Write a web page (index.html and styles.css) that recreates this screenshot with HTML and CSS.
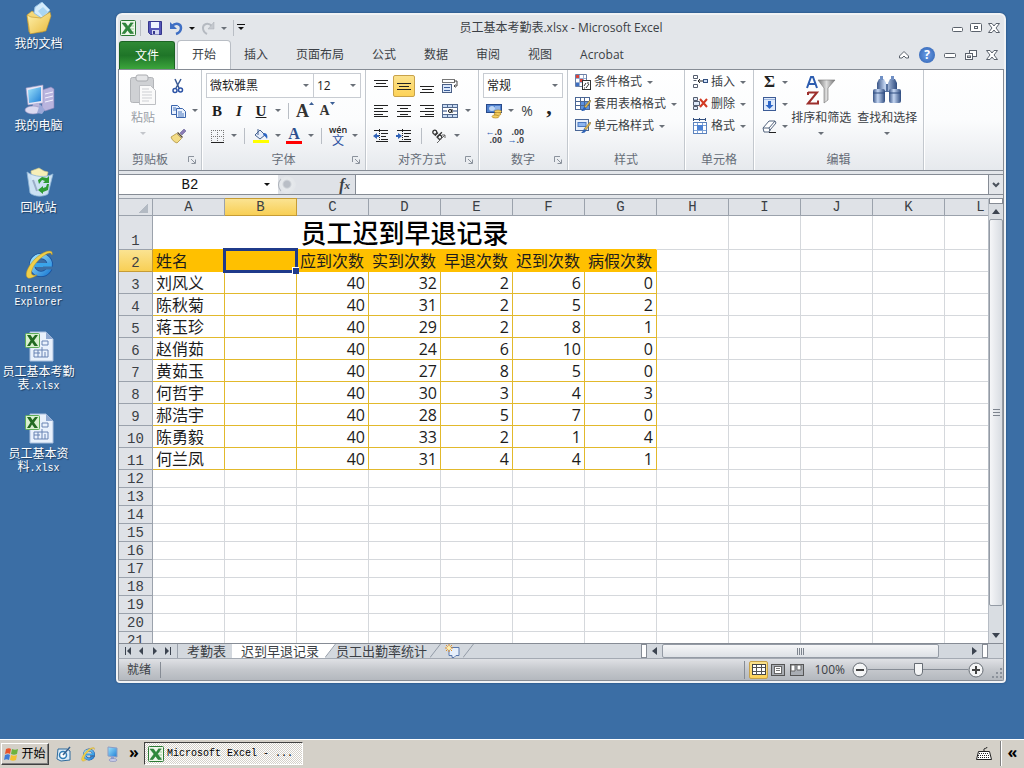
FILE: index.html
```
<!DOCTYPE html>
<html lang="zh-CN">
<head>
    <meta charset="UTF-8">
    <meta name="viewport" content="width=device-width, initial-scale=1.0">
    <title>员工基本考勤表.xlsx - Microsoft Excel</title>
    <link rel="stylesheet" href="styles.css">
</head>
<body>
    <!-- shared icons -->
    <svg class="defs" aria-hidden="true">
        <linearGradient id="gBlue" x1="0" y1="0" x2="1" y2="1"><stop offset="0" stop-color="#9fe4fb"/><stop offset="1" stop-color="#1f7ed6"/></linearGradient>
        <linearGradient id="gFolder" x1="0" y1="0" x2="1" y2="1"><stop offset="0" stop-color="#fff3b0"/><stop offset="1" stop-color="#e8b93c"/></linearGradient>
        <linearGradient id="gTube" x1="0" y1="0" x2="1" y2="0"><stop offset="0" stop-color="#3a5688"/><stop offset=".4" stop-color="#c4d6f2"/><stop offset="1" stop-color="#2f4c80"/></linearGradient>
        <linearGradient id="gFunnel" x1="0" y1="0" x2="1" y2="0"><stop offset="0" stop-color="#777"/><stop offset=".5" stop-color="#ddd"/><stop offset="1" stop-color="#777"/></linearGradient>
        <symbol id="xl" viewBox="0 0 16 16">
            <rect x=".5" y=".5" width="15" height="15" rx="1" fill="#eef8ea" stroke="#2c7a35"/>
            <path d="M10 3h4M10 6h4M10 9h4M10 12h4" stroke="#9bcb98"/>
            <path d="M2 3h3.500l2.500 3.500L10.500 3H13L9.500 8l4 5.500H10L7.500 10 5 13.500H2L6 8z" fill="#2f8a3b" stroke="#1d6a2a" stroke-width=".5"/>
        </symbol>
        <symbol id="xlsx" viewBox="0 0 32 32">
            <path d="M7 2h16l7 7v22H7z" fill="#e9f1fc" stroke="#a9bedd"/>
            <path d="M23 2v7h7z" fill="#8fa9d2"/>
            <path d="M19 11h6M19 15h6M19 11v4M25 11v4M11 20h14M11 20v7M11 27h14M15 20v7M19 17v10M22 22v5M25 20v7M11 23h6" stroke="#6883b3" fill="none"/>
            <rect x="2.500" y="3.500" width="14" height="14" rx="1" fill="#d9f0cf" stroke="#5fae58"/>
            <path d="M4 5h3.500l2 3 2.500-3h3l-4 5.500 4 5.500h-3.500L9 12.500 7 16H4l3.500-5.500z" fill="#236b22"/>
        </symbol>
        <symbol id="ie" viewBox="0 0 32 32">
            <circle cx="18" cy="17" r="9" fill="none" stroke="#174f9c" stroke-width="6"/>
            <circle cx="18" cy="17" r="9" fill="none" stroke="url(#gBlue)" stroke-width="4.500"/>
            <path d="M11 17h17" stroke="#3aa4ea" stroke-width="4"/>
            <path d="M20 20h10" stroke="#3b6ea5" stroke-width="3"/>
            <path d="M29 7c2-7-9-4-17 4S1 28 5 30c2 1 6-1 9-3-4 1-7 0-5-5 2-6 8-12 13-15 3-2 6-3 7 0z" fill="#efcf4a" stroke="#b78d20" stroke-width=".5"/>
        </symbol>
        <symbol id="launch" viewBox="0 0 8 8"><path d="M.5 6V.5H6M3 3l4 4M7.500 3.500v4h-4" fill="none" stroke="#8b929c"/></symbol>
        <symbol id="slash" viewBox="0 0 11 16" preserveAspectRatio="none"><path d="M0 15.500L10.500 0" stroke="#8f98a3" fill="none"/></symbol>
    </svg>

    <main class="desktop">
        <nav class="shortcuts">
            <a class="shortcut" href="#">
                <svg viewBox="0 0 32 32"><path d="M4 13l5-4 3 2h4l8-1v4l-4 16-14 0z" fill="#f5d878" stroke="#c99c2d" stroke-width=".6"/><path d="M12 5l7-5 8 8-7 9-9-6z" fill="#d5ecfb" stroke="#93bfe2"/><path d="M15 9l5-4 5 5-5 5z" fill="#a9d5f3"/><path d="M4 13l4 2 10 1 9-6 1 4-5 15-16 3z" fill="url(#gFolder)" stroke="#c0932a" stroke-width=".6"/></svg>
                <span>我的文档</span>
            </a>
            <a class="shortcut" href="#">
                <svg viewBox="0 0 32 32"><path d="M19 6l9-3 3 2v19l-9 3-3-3z" fill="#b9b4de" stroke="#8580b5" stroke-width=".6"/><path d="M22 10l8-2M22 14l8-2M22 18l8-2" stroke="#f3f2ff"/><path d="M3 4l17-3v18L5 21z" fill="#e8e6f6" stroke="#9a96c0" stroke-width=".6"/><path d="M5 6l13-3v14L6 19z" fill="url(#gBlue)"/><path d="M10 20l6-1 2 5H9z" fill="#b9b6db"/><ellipse cx="10" cy="26" rx="8" ry="4" fill="#dcdaf0" stroke="#9591bf" stroke-width=".6"/><path d="M17 20l5 6-3 4-5-1z" fill="#9ba8d8"/></svg>
                <span>我的电脑</span>
            </a>
            <a class="shortcut" href="#">
                <svg viewBox="0 0 32 32"><path d="M8 5l8-3 5 3 4 1-2 8H9z" fill="#f6efb8" stroke="#d4c784" stroke-width=".6"/><path d="M4 6l3 21c4 4 14 4 18 1l5-20c-7 4-19 3-26-2z" fill="#d6e9f8" fill-opacity=".94" stroke="#8eb5d5" stroke-width=".8"/><path d="M10 14l4 11" stroke="#9badc8" stroke-width="2"/><path d="M15 14l4-3 5 1 2-2v7h-6l2-2-3-1-3 4zM26 18l-1 6-5 2v2l-5-4 5-4v2l3-1 1-3z" fill="#2d9b33"/></svg>
                <span>回收站</span>
            </a>
            <a class="shortcut" href="#">
                <svg><use href="#ie"/></svg>
                <span class="latin">Internet<br>Explorer</span>
            </a>
            <a class="shortcut" href="#">
                <svg><use href="#xlsx"/></svg>
                <span>员工基本考勤<br>表<span class="latin">.xlsx</span></span>
            </a>
            <a class="shortcut" href="#">
                <svg><use href="#xlsx"/></svg>
                <span>员工基本资<br>料<span class="latin">.xlsx</span></span>
            </a>
        </nav>

        <section class="window">
            <header class="title-bar">
                <div class="quick-access">
                    <svg class="icon"><use href="#xl"/></svg>
                    <i class="sep"></i>
                    <button class="tool" aria-label="保存"><svg class="icon" viewBox="0 0 16 16"><path d="M1.500 1.500h13v13h-11l-2-2z" fill="#5556b8" stroke="#35368c"/><rect x="4" y="2" width="8" height="6" fill="#eef3ff"/><rect x="5" y="10" width="7" height="4.500" fill="#d5daf0"/><rect x="6" y="11" width="2" height="3" fill="#35368c"/></svg></button>
                    <button class="tool" aria-label="撤消"><svg class="icon" viewBox="0 0 16 16"><path d="M4 6c4-4 9-2 9 2 0 3-2 5-5 6" fill="none" stroke="#3f6fc4" stroke-width="2.500"/><path d="M2 2v7h7z" fill="#3f6fc4"/></svg></button>
                    <button class="drop dark" aria-label="撤消列表"></button>
                    <button class="tool" aria-label="恢复"><svg class="icon" viewBox="0 0 16 16"><path d="M12 6C8 2 3 4 3 8c0 3 2 5 4 6" fill="none" stroke="#b5bac1" stroke-width="2"/><path d="M14 2v7H8z" fill="#c5c9cf" stroke="#a9aeb5" stroke-width=".5"/></svg></button>
                    <button class="drop" aria-label="恢复列表"></button>
                    <i class="sep"></i>
                    <button class="customize" aria-label="自定义快速访问工具栏"></button>
                </div>
                <h1>员工基本考勤表.xlsx - Microsoft Excel</h1>
                <div class="window-buttons">
                    <button aria-label="最小化"><svg viewBox="0 0 12 12"><rect x=".5" y="5.500" width="10" height="4" rx="1" fill="#fff" stroke="#5b626c"/></svg></button>
                    <button aria-label="最大化"><svg viewBox="0 0 12 12"><rect x=".5" y="1.500" width="11" height="8" rx="1" fill="#fff" stroke="#5b626c"/><rect x="4.500" y="4.500" width="3" height="2" fill="none" stroke="#5b626c"/></svg></button>
                    <button aria-label="关闭"><svg viewBox="0 0 12 12"><path d="M.5 1.500h3.500L6 4l2-2.500h3.500L8 6l3.500 4.500H8L6 8l-2 2.500H.5L4 6z" fill="#fff" stroke="#5b626c"/></svg></button>
                </div>
            </header>

            <div class="ribbon-tabs">
                <button class="file-tab">文件</button>
                <button class="tab active">开始</button>
                <button class="tab">插入</button>
                <button class="tab">页面布局</button>
                <button class="tab">公式</button>
                <button class="tab">数据</button>
                <button class="tab">审阅</button>
                <button class="tab">视图</button>
                <button class="tab">Acrobat</button>
                <div class="book-buttons">
                    <button aria-label="折叠功能区"><svg viewBox="0 0 12 12"><path d="M1.500 7L6 2.500 10.500 7v2H8L6 7 4 9H1.500z" fill="#fff" stroke="#5b626c"/></svg></button>
                    <button class="help" aria-label="帮助">?</button>
                    <button aria-label="最小化工作簿"><svg viewBox="0 0 12 12"><rect x=".5" y="4.500" width="11" height="4" rx="1" fill="#fff" stroke="#5b626c"/></svg></button>
                    <button aria-label="还原工作簿"><svg viewBox="0 0 12 12"><rect x="4.500" y="1.500" width="7" height="6" fill="#fff" stroke="#5b626c"/><rect x=".5" y="4.500" width="7" height="6" fill="#fff" stroke="#5b626c"/><rect x="2.500" y="7" width="3" height="1.500" fill="none" stroke="#5b626c"/></svg></button>
                    <button aria-label="关闭工作簿"><svg viewBox="0 0 12 12"><path d="M.5 1.500h3.500L6 4l2-2.500h3.500L8 6l3.500 4.500H8L6 8l-2 2.500H.5L4 6z" fill="#fff" stroke="#5b626c"/></svg></button>
                </div>
            </div>

            <div class="ribbon">
                <section class="group clipboard">
                    <div class="group-body">
                        <button class="big muted">
                            <svg viewBox="0 0 28 32"><rect x="1.500" y="3.500" width="23" height="25" rx="2" fill="#cfd1d4" stroke="#b3b5b9"/><rect x="7" y="1" width="12" height="6" rx="2" fill="#e4e5e7" stroke="#a9abaf"/><path d="M10.500 11.500h11l5 5v14h-16z" fill="#fafafa" stroke="#bdbfc3"/><path d="M13 15h7M13 18h10M13 21h10M13 24h10M13 27h7" stroke="#cdcfd3"/></svg>
                            <span>粘贴</span>
                            <i class="caret"></i>
                        </button>
                        <div class="stack">
                            <div class="row"><button class="tool" aria-label="剪切"><svg class="icon" viewBox="0 0 16 16"><path d="M5 1l4 9M11 1L6 10" stroke="#3a5a94" stroke-width="1.500"/><circle cx="5" cy="12.500" r="2" fill="none" stroke="#2c53a5" stroke-width="1.500"/><circle cx="10.500" cy="12" r="2" fill="none" stroke="#2c53a5" stroke-width="1.500"/></svg></button></div>
                            <div class="row"><button class="tool" aria-label="复制"><svg class="icon" viewBox="0 0 16 16"><path d="M1.500 2.500h6l2 2v7h-8z" fill="#eaf2fd" stroke="#3c66ad"/><path d="M6.500 5.500h6l3 3v6h-9z" fill="#eaf2fd" stroke="#3c66ad"/><path d="M3 5h3M3 7h3M8 9h4M8 11h6M8 13h6" stroke="#4b78c0"/></svg></button><button class="drop" aria-label="复制选项"></button></div>
                            <div class="row"><button class="tool" aria-label="格式刷"><svg class="icon" viewBox="0 0 16 16"><path d="M10 5l4-4 2 2-4 4z" fill="#8a7bb5" stroke="#55508a" stroke-width=".5"/><path d="M8 4l5 5-1 1-5-5z" fill="#5a4a30"/><path d="M6.500 5.500l5 5L7 15c-3-1-5-3-6-6z" fill="#f3dc86" stroke="#a98a30" stroke-width=".7"/></svg></button></div>
                        </div>
                    </div>
                    <h2 class="group-name">剪贴板<svg><use href="#launch"/></svg></h2>
                </section>

                <section class="group font">
                    <div class="group-body rows">
                        <div class="row">
                            <span class="picker family"><select aria-label="字体"><option>微软雅黑</option></select><i class="caret"></i></span>
                            <span class="picker size"><select aria-label="字号"><option>12</option></select><i class="caret"></i></span>
                        </div>
                        <div class="row">
                            <button class="tool serif bold">B</button>
                            <button class="tool serif bold italic">I</button>
                            <button class="tool serif bold underline">U</button>
                            <button class="drop" aria-label="下划线选项"></button>
                            <i class="sep"></i>
                            <button class="tool serif grow">A<svg viewBox="0 0 5 3"><path d="M0 3h5L2.500 0z" fill="#3c5f96"/></svg></button>
                            <button class="tool serif shrink">A<svg viewBox="0 0 5 3"><path d="M0 0h5L2.500 3z" fill="#3c5f96"/></svg></button>
                        </div>
                        <div class="row">
                            <button class="tool" aria-label="边框"><svg class="icon" viewBox="0 0 16 16"><path d="M2 2.500h13M2 8.500h13M2.500 2v12M8.500 2v12M14.500 2v12" stroke="#777" stroke-dasharray="1 1" fill="none"/><path d="M2 14.500h13" stroke="#222"/></svg></button>
                            <button class="drop" aria-label="边框选项"></button>
                            <i class="sep"></i>
                            <button class="tool" aria-label="填充颜色"><svg class="icon" viewBox="0 0 16 16"><path d="M2 7l5-5 5 5-5 4z" fill="#e6eefb" stroke="#44618f"/><path d="M5 1v6" stroke="#44618f"/><path d="M11 5c3 0 4 3 3 6-1-2-2-3-4-4z" fill="#2c66c4"/><rect x="0" y="12" width="16" height="3" fill="#ff0"/></svg></button>
                            <button class="drop" aria-label="填充颜色选项"></button>
                            <button class="tool serif font-color">A</button>
                            <button class="drop" aria-label="字体颜色选项"></button>
                            <i class="sep"></i>
                            <button class="tool phonetic"><small>wén</small>文</button>
                            <button class="drop" aria-label="拼音选项"></button>
                        </div>
                    </div>
                    <h2 class="group-name">字体<svg><use href="#launch"/></svg></h2>
                </section>

                <section class="group align">
                    <div class="group-body rows">
                        <div class="row">
                            <button class="tool" aria-label="顶端对齐"><svg class="icon" viewBox="0 0 16 16"><path d="M1 2.500h14M3 5.500h10M1 8.500h14" stroke="#222"/></svg></button>
                            <button class="tool pressed" aria-label="垂直居中"><svg class="icon" viewBox="0 0 16 16"><path d="M1 5.500h14M3 8.500h10M1 11.500h14" stroke="#222"/></svg></button>
                            <button class="tool" aria-label="底端对齐"><svg class="icon" viewBox="0 0 16 16"><path d="M1 8.500h14M3 11.500h10M1 14.500h14" stroke="#222"/></svg></button>
                            <button class="tool" aria-label="自动换行"><svg class="icon" viewBox="0 0 16 16"><rect x=".5" y="1.500" width="12" height="3" fill="#fff" stroke="#777"/><rect x=".5" y="6.500" width="9" height="8" fill="#dbe8fa" stroke="#4a5f85"/><path d="M2 9.500h6M2 12.500h6" stroke="#3b5d9a"/><path d="M12 3h3v5h-3M13.500 6.500L12 8l1.500 1.500" fill="none" stroke="#444"/></svg></button>
                        </div>
                        <div class="row">
                            <button class="tool" aria-label="左对齐"><svg class="icon" viewBox="0 0 16 16"><path d="M1 2.500h14M1 5.500h9M1 8.500h14M1 11.500h9M1 13.500h14" stroke="#222"/></svg></button>
                            <button class="tool" aria-label="居中"><svg class="icon" viewBox="0 0 16 16"><path d="M1 2.500h14M4 5.500h8M1 8.500h14M4 11.500h8M1 13.500h14" stroke="#222"/></svg></button>
                            <button class="tool" aria-label="右对齐"><svg class="icon" viewBox="0 0 16 16"><path d="M1 2.500h14M6 5.500h9M1 8.500h14M6 11.500h9M1 13.500h14" stroke="#222"/></svg></button>
                            <button class="tool" aria-label="合并后居中"><svg class="icon" viewBox="0 0 16 16"><rect x=".5" y="1.500" width="15" height="13" fill="#c9dcf5" stroke="#52698f"/><rect x="1" y="5" width="14" height="6" fill="#fff"/><path d="M5.500 2v3M10.500 2v3M5.500 11v3M10.500 11v3M1 4.500h14M1 11.500h14" stroke="#52698f"/><path d="M1 8h4M11 8h4" stroke="#23427c"/><circle cx="8" cy="8" r="1.500" fill="none" stroke="#111"/><path d="M10 6v4" stroke="#111"/></svg></button>
                            <button class="drop" aria-label="合并选项"></button>
                        </div>
                        <div class="row">
                            <button class="tool" aria-label="减少缩进"><svg class="icon" viewBox="0 0 16 16"><path d="M1 2.500h14M8 5.500h7M8 8.500h5M8 11.500h7M3 13.500h12" stroke="#222"/><path d="M6.500 1v14" stroke="#222" stroke-dasharray="1 1"/><path d="M0 8l4-3v2h2v2H4v2z" fill="#2f62b8"/></svg></button>
                            <button class="tool" aria-label="增加缩进"><svg class="icon" viewBox="0 0 16 16"><path d="M1 2.500h14M8 5.500h7M8 8.500h5M8 11.500h7M3 13.500h12" stroke="#222"/><path d="M6.500 1v14" stroke="#222" stroke-dasharray="1 1"/><path d="M6 8L2 5v2H0v2h2v2z" fill="#2f62b8"/></svg></button>
                            <i class="sep"></i>
                            <button class="tool" aria-label="方向"><svg class="icon" viewBox="0 0 16 16"><g transform="rotate(45 7 6)" fill="none" stroke="#333" stroke-width="1.300"><circle cx="3.500" cy="7" r="2"/><path d="M6 5v4.500M8.500 2v7.500"/><circle cx="10.500" cy="7" r="2"/></g><path d="M6 15l8-8M14 10V7h-3" stroke="#666" fill="none"/></svg></button>
                            <button class="drop" aria-label="方向选项"></button>
                        </div>
                    </div>
                    <h2 class="group-name">对齐方式<svg><use href="#launch"/></svg></h2>
                </section>

                <section class="group number">
                    <div class="group-body rows">
                        <div class="row">
                            <span class="picker format"><select aria-label="数字格式"><option>常规</option></select><i class="caret"></i></span>
                        </div>
                        <div class="row">
                            <button class="tool" aria-label="会计数字格式"><svg class="icon" viewBox="0 0 16 16"><rect x=".5" y="1.500" width="15" height="8" fill="#4d7fcd" stroke="#27498a"/><ellipse cx="6" cy="5.500" rx="3" ry="2.500" fill="#bcd5f5"/><path d="M9 3h5v5h-5z" fill="#8db2e8"/><ellipse cx="12" cy="8.500" rx="3.500" ry="1.500" fill="#f5cf60" stroke="#a4781d" stroke-width=".6"/><ellipse cx="11.500" cy="11" rx="3.500" ry="1.500" fill="#f5cf60" stroke="#a4781d" stroke-width=".6"/><ellipse cx="9.500" cy="13.500" rx="3.500" ry="1.500" fill="#f5cf60" stroke="#a4781d" stroke-width=".6"/></svg></button>
                            <button class="drop" aria-label="会计数字格式选项"></button>
                            <button class="tool percent">%</button>
                            <button class="tool comma">,</button>
                        </div>
                        <div class="row">
                            <button class="tool decimals"><span><b>←</b>.0</span><span>.00</span></button>
                            <button class="tool decimals"><span>.00</span><span><b>→</b>.0</span></button>
                        </div>
                    </div>
                    <h2 class="group-name">数字<svg><use href="#launch"/></svg></h2>
                </section>

                <section class="group styles">
                    <div class="group-body list">
                        <button class="item"><svg class="icon" viewBox="0 0 16 16"><path d="M.5.500h11v12H.5z" fill="#fff" stroke="#6b7fa5"/><path d="M1 4.500h10M1 8.500h10M4.500 1v11M8.500 1v11" stroke="#9aaed0"/><path d="M1 1h3v3H1zM5 5h3v3H5z" fill="#d9433a"/><path d="M1 9h3v3H1z" fill="#3c6fc2"/><rect x="7.500" y="6.500" width="8" height="9" fill="#fff" stroke="#333"/><path d="M9 12l2-3M11 14l3-4M12 9h2M9 14h1" stroke="#333"/></svg>条件格式<i class="caret"></i></button>
                        <button class="item"><svg class="icon" viewBox="0 0 16 16"><rect x=".5" y="1.500" width="14" height="12" fill="#fff" stroke="#4a6695"/><path d="M5 5h9v8H5z" fill="#5d92e0"/><path d="M1 5.500h13M1 9.500h13M5.500 2v11M9.500 2v11" stroke="#4a6695"/><path d="M15 4l1 1-5 7-2-1z" fill="#e0b950" stroke="#77602a" stroke-width=".5"/><path d="M9 11l2 1c0 3-3 3-5 3 2-1 2-3 3-4z" fill="#2d62b5"/></svg>套用表格格式<i class="caret"></i></button>
                        <button class="item"><svg class="icon" viewBox="0 0 16 16"><rect x=".5" y="1.500" width="13" height="11" fill="#e8f0fb" stroke="#4a6695"/><rect x="3" y="4.500" width="8" height="4" fill="#8db5ee" stroke="#4a78c0"/><path d="M15 4l1 1-5 7-2-1z" fill="#e0b950" stroke="#77602a" stroke-width=".5"/><path d="M9 11l2 1c0 3-3 3-5 3 2-1 2-3 3-4z" fill="#2d62b5"/></svg>单元格样式<i class="caret"></i></button>
                    </div>
                    <h2 class="group-name">样式</h2>
                </section>

                <section class="group cells">
                    <div class="group-body list">
                        <button class="item"><svg class="icon" viewBox="0 0 16 16"><path d="M1.500 1.500h4v3h-4zM1.500 10.500h4v3h-4zM1.500 6.500h3" fill="#fff" stroke="#555e6e"/><rect x="11.500" y="5.500" width="4" height="3" fill="#cfe0f8" stroke="#33507f"/><path d="M6 7h5M8 5L6 7l2 2" stroke="#222" fill="none"/></svg>插入<i class="caret"></i></button>
                        <button class="item"><svg class="icon" viewBox="0 0 16 16"><path d="M1.500 1.500h4v3h-4zM1.500 10.500h4v3h-4zM1.500 5.500h6v4h-6z" fill="#dfe9f8" stroke="#555e6e"/><path d="M8 3l7 8M15 3l-7 8" stroke="#d23a22" stroke-width="2"/></svg>删除<i class="caret"></i></button>
                        <button class="item"><svg class="icon" viewBox="0 0 16 16"><path d="M1 1.500h13M1.500 0v3M7.500 0v3M13.500 0v3" stroke="#33507f"/><rect x="1.500" y="4.500" width="13" height="11" fill="#fff" stroke="#5b82bd"/><path d="M2 7.500h12M2 12.500h12M5.500 5v10M10.500 5v10" stroke="#7fa3d8"/><rect x="5" y="7" width="6" height="5" fill="#4c82d4"/></svg>格式<i class="caret"></i></button>
                    </div>
                    <h2 class="group-name">单元格</h2>
                </section>

                <section class="group editing">
                    <div class="group-body">
                        <div class="list">
                            <button class="item sigma">Σ<i class="caret"></i></button>
                            <button class="item" aria-label="填充"><svg class="icon" viewBox="0 0 16 16"><rect x="2.500" y="1.500" width="12" height="13" fill="#dfeafb" stroke="#3c5b96"/><path d="M3 3.500h11" stroke="#9bb5df"/><path d="M7 5h3v4h2.500l-4 4-4-4H7z" fill="#2d66c8"/></svg><i class="caret"></i></button>
                            <button class="item" aria-label="清除"><svg class="icon" viewBox="0 0 16 16"><path d="M2 10l6-7h6l1 2-6 7-1 2H3z" fill="#fff" stroke="#53647f"/><path d="M2 10h6l6-7M8 10l1 3" fill="none" stroke="#53647f"/><path d="M8 14.500h7" stroke="#222"/></svg><i class="caret"></i></button>
                        </div>
                        <button class="big">
                            <svg viewBox="0 0 30 32"><path d="M12 6h17l-7 8v12l-4 3V14z" fill="url(#gFunnel)" stroke="#777" stroke-width=".6"/><path d="M1 14L5 3h2l4 11M3 10h6" fill="none" stroke="#2d5db0" stroke-width="2"/><path d="M2 18.500h9L2 29.500h10v-3M2 21v-3" fill="none" stroke="#9c2f2c" stroke-width="2"/></svg>
                            <span>排序和筛选</span>
                            <i class="caret"></i>
                        </button>
                        <button class="big">
                            <svg viewBox="0 0 30 32"><rect x="11" y="10" width="8" height="8" fill="#55719f"/><path d="M5 9l2-4h5l2 4v8H5zM16 9l2-4h5l2 4v8h-9z" fill="url(#gTube)"/><path d="M8 2h3v4H8zM19 2h3v4h-3z" fill="#6f8fc4"/><rect x="1" y="15" width="12" height="14" rx="2" fill="url(#gTube)"/><rect x="17" y="15" width="12" height="14" rx="2" fill="url(#gTube)"/><path d="M1 19h12M17 19h12" stroke="#2f4c80"/></svg>
                            <span>查找和选择</span>
                            <i class="caret"></i>
                        </button>
                    </div>
                    <h2 class="group-name">编辑</h2>
                </section>
            </div>

            <div class="formula-bar">
                <div class="name-box">
                    <input type="text" value="B2" aria-label="名称框">
                    <button class="drop dark" aria-label="名称列表"></button>
                </div>
                <div class="fx-area">
                    <i class="knob"></i>
                    <button class="fx" aria-label="插入函数">f<sub>x</sub></button>
                </div>
                <input class="formula" type="text" aria-label="编辑栏">
                <button class="expand" aria-label="展开编辑栏"><svg viewBox="0 0 8 6"><path d="M1 1l3 3 3-3" fill="none" stroke="#4b525c" stroke-width="2"/></svg></button>
            </div>

            <div class="sheet-area">
                <div class="sheet">
                    <table>
                        <colgroup><col class="row-col"><col span="12"></colgroup>
                        <thead>
                            <tr><th class="corner"></th><th>A</th><th class="current">B</th><th>C</th><th>D</th><th>E</th><th>F</th><th>G</th><th>H</th><th>I</th><th>J</th><th>K</th><th>L</th></tr>
                        </thead>
                        <tbody>
                            <tr class="heading"><th>1</th><td colspan="7">员工迟到早退记录</td><td></td><td></td><td></td><td></td><td></td></tr>
                            <tr class="fields"><th class="current">2</th><td>姓名</td><td class="selected"></td><td>应到次数</td><td>实到次数</td><td>早退次数</td><td>迟到次数</td><td>病假次数</td><td></td><td></td><td></td><td></td><td></td></tr>
                            <tr class="data"><th>3</th><td>刘风义</td><td></td><td>40</td><td>32</td><td>2</td><td>6</td><td>0</td><td></td><td></td><td></td><td></td><td></td></tr>
                            <tr class="data"><th>4</th><td>陈秋菊</td><td></td><td>40</td><td>31</td><td>2</td><td>5</td><td>2</td><td></td><td></td><td></td><td></td><td></td></tr>
                            <tr class="data"><th>5</th><td>蒋玉珍</td><td></td><td>40</td><td>29</td><td>2</td><td>8</td><td>1</td><td></td><td></td><td></td><td></td><td></td></tr>
                            <tr class="data"><th>6</th><td>赵俏茹</td><td></td><td>40</td><td>24</td><td>6</td><td>10</td><td>0</td><td></td><td></td><td></td><td></td><td></td></tr>
                            <tr class="data"><th>7</th><td>黄茹玉</td><td></td><td>40</td><td>27</td><td>8</td><td>5</td><td>0</td><td></td><td></td><td></td><td></td><td></td></tr>
                            <tr class="data"><th>8</th><td>何哲宇</td><td></td><td>40</td><td>30</td><td>3</td><td>4</td><td>3</td><td></td><td></td><td></td><td></td><td></td></tr>
                            <tr class="data"><th>9</th><td>郝浩宇</td><td></td><td>40</td><td>28</td><td>5</td><td>7</td><td>0</td><td></td><td></td><td></td><td></td><td></td></tr>
                            <tr class="data"><th>10</th><td>陈勇毅</td><td></td><td>40</td><td>33</td><td>2</td><td>1</td><td>4</td><td></td><td></td><td></td><td></td><td></td></tr>
                            <tr class="data"><th>11</th><td>何兰凤</td><td></td><td>40</td><td>31</td><td>4</td><td>4</td><td>1</td><td></td><td></td><td></td><td></td><td></td></tr>
                            <tr><th>12</th><td></td><td></td><td></td><td></td><td></td><td></td><td></td><td></td><td></td><td></td><td></td><td></td></tr>
                            <tr><th>13</th><td></td><td></td><td></td><td></td><td></td><td></td><td></td><td></td><td></td><td></td><td></td><td></td></tr>
                            <tr><th>14</th><td></td><td></td><td></td><td></td><td></td><td></td><td></td><td></td><td></td><td></td><td></td><td></td></tr>
                            <tr><th>15</th><td></td><td></td><td></td><td></td><td></td><td></td><td></td><td></td><td></td><td></td><td></td><td></td></tr>
                            <tr><th>16</th><td></td><td></td><td></td><td></td><td></td><td></td><td></td><td></td><td></td><td></td><td></td><td></td></tr>
                            <tr><th>17</th><td></td><td></td><td></td><td></td><td></td><td></td><td></td><td></td><td></td><td></td><td></td><td></td></tr>
                            <tr><th>18</th><td></td><td></td><td></td><td></td><td></td><td></td><td></td><td></td><td></td><td></td><td></td><td></td></tr>
                            <tr><th>19</th><td></td><td></td><td></td><td></td><td></td><td></td><td></td><td></td><td></td><td></td><td></td><td></td></tr>
                            <tr><th>20</th><td></td><td></td><td></td><td></td><td></td><td></td><td></td><td></td><td></td><td></td><td></td><td></td></tr>
                            <tr><th>21</th><td></td><td></td><td></td><td></td><td></td><td></td><td></td><td></td><td></td><td></td><td></td><td></td></tr>
                        </tbody>
                    </table>
                </div>
                <div class="v-scroll">
                    <i class="split"></i>
                    <button aria-label="向上滚动"><i class="arrow up"></i></button>
                    <div class="thumb"></div>
                    <button aria-label="向下滚动"><i class="arrow down"></i></button>
                </div>
            </div>

            <div class="sheet-bar">
                <div class="sheet-nav">
                    <button aria-label="第一张"><svg viewBox="0 0 8 8"><path d="M1.500 0v8" stroke="#3c4450"/><path d="M7 0v8L3 4z" fill="#3c4450"/></svg></button>
                    <button aria-label="上一张"><svg viewBox="0 0 8 8"><path d="M6 0v8L2 4z" fill="#3c4450"/></svg></button>
                    <button aria-label="下一张"><svg viewBox="0 0 8 8"><path d="M2 0v8l4-4z" fill="#3c4450"/></svg></button>
                    <button aria-label="最后一张"><svg viewBox="0 0 8 8"><path d="M6.500 0v8" stroke="#3c4450"/><path d="M1 0v8l4-4z" fill="#3c4450"/></svg></button>
                </div>
                <button class="sheet-tab">考勤表</button>
                <button class="sheet-tab active">迟到早退记录</button>
                <svg class="slash on" viewBox="0 0 11 16" preserveAspectRatio="none"><path d="M0 0h11L0 16z" fill="#fff"/><path d="M0 15.500L10.500 0" stroke="#8f98a3"/></svg>
                <button class="sheet-tab flush">员工出勤率统计</button>
                <svg class="slash"><use href="#slash"/></svg>
                <button class="new-sheet" aria-label="插入工作表"><svg class="icon" viewBox="0 0 16 16"><path d="M5 4.500h10v8h-3l-2 2H8v-2H5z" fill="#e6effb" stroke="#5a78ac"/><path d="M5 1v8M1 5h8M2 2l6 6M8 2L2 8" stroke="#e0912a"/><circle cx="5" cy="5" r="2" fill="#fff0b0"/></svg></button>
                <svg class="slash"><use href="#slash"/></svg>
                <div class="h-scroll">
                    <i class="split"></i>
                    <button aria-label="向左滚动"><i class="arrow left"></i></button>
                    <div class="track"><div class="thumb"></div></div>
                    <button aria-label="向右滚动"><i class="arrow right"></i></button>
                    <i class="split"></i>
                </div>
            </div>

            <footer class="status-bar">
                <span class="state">就绪</span>
                <div class="views">
                    <button class="pressed" aria-label="普通"><svg viewBox="0 0 14 12"><rect x=".5" y=".5" width="13" height="10" fill="#fff" stroke="#444"/><path d="M1 3.500h12M1 7.500h12M4.500 1v10M9.500 1v10" stroke="#555"/></svg></button>
                    <button aria-label="页面布局"><svg viewBox="0 0 14 12"><rect x=".5" y=".5" width="13" height="11" fill="#a9adb3" stroke="#555"/><rect x="3.500" y="2.500" width="7" height="7" fill="#fff" stroke="#666"/><path d="M5 4.500h4M5 6.500h4" stroke="#777"/></svg></button>
                    <button aria-label="分页预览"><svg viewBox="0 0 14 12"><rect x=".5" y=".5" width="13" height="11" fill="#a9adb3" stroke="#555"/><path d="M1 1h4v6H1zM7 1h4v5H7z" fill="#fff" stroke="#666"/></svg></button>
                </div>
                <span class="zoom-value">100%</span>
                <button class="round" aria-label="缩小"><svg viewBox="0 0 16 16"><circle cx="8" cy="8" r="7" fill="#f4f5f6" stroke="#666c74"/><path d="M4 8h8" stroke="#444" stroke-width="2"/></svg></button>
                <input class="zoom" type="range" min="0" max="100" value="50" aria-label="显示比例">
                <button class="round" aria-label="放大"><svg viewBox="0 0 16 16"><circle cx="8" cy="8" r="7" fill="#f4f5f6" stroke="#666c74"/><path d="M4 8h8M8 4v8" stroke="#444" stroke-width="2"/></svg></button>
                <svg class="grip" viewBox="0 0 12 12"><path d="M9 1h2v2H9zM9 5h2v2H9zM5 5h2v2H5zM9 9h2v2H9zM5 9h2v2H5zM1 9h2v2H1z" fill="#8c929b"/></svg>
            </footer>
        </section>
    </main>

    <footer class="taskbar">
        <button class="start">
            <svg class="icon" viewBox="0 0 16 16"><path d="M2 3c2-1 4-1 5 0L6 8C5 7 3 7 1 8z" fill="#e8532c"/><path d="M8 3c2 1 4 1 6 0l-1 5c-2 1-4 1-6 0z" fill="#6cb33e"/><path d="M1 9c2-1 4-1 5 0l-1 5c-2-1-3-1-5 0z" fill="#3f7bd8"/><path d="M7 9c2 1 4 1 6 0l-1 5c-2 1-4 1-6 0z" fill="#f3c12f"/></svg>开始
        </button>
        <nav class="quick-launch">
            <a href="#" aria-label="显示桌面"><svg class="icon" viewBox="0 0 16 16"><path d="M2 3h9l3 2v9l-9 1-4-2z" fill="#dcecf9" stroke="#2f6b9c"/><circle cx="7" cy="9" r="3.500" fill="#fff" stroke="#2f7cb5" stroke-width="1.500"/><path d="M7 9l7-8" stroke="#35608d" stroke-width="1.500"/></svg></a>
            <a href="#" aria-label="Internet Explorer"><svg class="icon"><use href="#ie"/></svg></a>
            <a href="#" aria-label="我的电脑"><svg class="icon" viewBox="0 0 16 16"><path d="M4 1l9 1v9l-9-1z" fill="url(#gBlue)" stroke="#8c9cc4"/><path d="M7 10h3v3H7z" fill="#8e9fd0"/><ellipse cx="9" cy="14" rx="4" ry="1.500" fill="#c9cdea" stroke="#7a83b5" stroke-width=".6"/></svg></a>
        </nav>
        <button class="more" aria-label="更多">»</button>
        <button class="task"><svg class="icon"><use href="#xl"/></svg><span class="latin">Microsoft Excel - ...</span></button>
        <div class="tray">
            <svg class="icon" viewBox="0 0 16 16"><path d="M8 5V3c0-1 3 0 3-2" stroke="#222" fill="none"/><path d="M2.500 5.500h11l2 8H.5z" fill="#fff" stroke="#222"/><path d="M3 7.500h10M2 9.500h12M2 11.500h12" stroke="#222" stroke-dasharray="1 1"/></svg>
            <button class="more" aria-label="展开托盘">«</button>
        </div>
    </footer>
</body>
</html>
```
FILE: styles.css
```
* {
    margin: 0;
    padding: 0;
    box-sizing: border-box;
}

body {
    font-family: "Open Sans", "Noto Sans CJK SC", sans-serif;
    font-size: 12px;
    line-height: 16px;
    color: #3b3f45;
    background: #3b6ea5;
    height: 100vh;
    display: flex;
    flex-direction: column;
    overflow: hidden;
}

button,
input,
select {
    font: inherit;
    color: inherit;
    background: none;
    border: none;
    outline: none;
}

button {
    display: flex;
    align-items: center;
    justify-content: center;
    flex-shrink: 0;
}

svg {
    display: block;
    flex-shrink: 0;
}

.defs {
    position: absolute;
    width: 0;
    height: 0;
}

.icon {
    width: 16px;
    height: 16px;
}

.latin {
    font-family: "Liberation Mono", monospace;
    font-size: 10px;
}

/* desktop */
.desktop {
    flex: 1;
    min-height: 0;
    display: flex;
    padding: 0 18px 56px 0;
}

.shortcuts {
    width: 116px;
    padding: 2px 39px 0 0;
    display: grid;
    grid-auto-rows: 82px;
    align-content: start;
}

.shortcut {
    display: flex;
    flex-direction: column;
    align-items: center;
    gap: 3px;
    color: #fff;
    text-decoration: none;
    text-align: center;
    line-height: 13px;
    white-space: nowrap;
    text-shadow: 1px 1px 1px #1c3a5c;
}

.shortcut svg {
    width: 32px;
    height: 32px;
}

/* window */
.window {
    flex: 1;
    min-width: 0;
    margin-top: 13px;
    display: flex;
    flex-direction: column;
    border: 2px solid #f1f3f5;
    border-radius: 6px 6px 4px 4px;
    background: #e3e6ea;
    box-shadow: 0 0 2px #1d4270;
    overflow: hidden;
}

.title-bar {
    height: 26px;
    display: grid;
    grid-template-columns: 1fr auto 1fr;
    align-items: center;
    padding: 0 2px;
}

.title-bar h1 {
    font-size: 12px;
    font-weight: 400;
}

.quick-access {
    display: flex;
    align-items: center;
}

.quick-access .sep {
    width: 8px;
}

.quick-access .tool {
    width: 21px;
}

.window-buttons,
.book-buttons {
    display: flex;
    align-items: center;
    justify-content: flex-end;
    gap: 6px;
    padding-right: 2px;
}

.window-buttons svg,
.book-buttons svg {
    width: 12px;
    height: 12px;
}

.tool {
    width: 22px;
    height: 22px;
}

.drop {
    width: 11px;
    height: 22px;
}

.drop::before,
.caret {
    content: "";
    border: 3px solid transparent;
    border-top-color: #6a7078;
    border-bottom: none;
    flex-shrink: 0;
}

.dark::before {
    border-top-color: #111;
}

.sep {
    width: 11px;
    height: 16px;
    background: linear-gradient(#b9bec5, #b9bec5) center / 1px 100% no-repeat;
}

.customize {
    width: 8px;
    height: 8px;
    border-top: 1px solid #111;
}

.customize::before {
    content: "";
    border: 3px solid transparent;
    border-top-color: #111;
    border-bottom: none;
}

/* ribbon tabs */
.ribbon-tabs {
    height: 28px;
    display: flex;
    padding: 0 1px;
}

.file-tab {
    width: 56px;
    margin-right: 3px;
    border-radius: 3px 3px 0 0;
    color: #fff;
    background: linear-gradient(#2f8a35, #1f7528 50%, #3ca53c);
    border: 1px solid #1b6423;
    border-bottom: none;
}

.tab {
    padding: 0 14px;
}

.tab.active {
    background: #fff;
    border-radius: 3px 3px 0 0;
    box-shadow: 0 0 0 1px #b9bec5;
    clip-path: inset(-1px -1px 0 -1px);
}

.book-buttons {
    margin-left: auto;
    gap: 9px;
    padding-right: 5px;
}

.help {
    width: 16px;
    height: 16px;
    border-radius: 50%;
    background: radial-gradient(#6b9de6, #2c5fb0);
    color: #fff;
    font-weight: 700;
}

/* ribbon */
.ribbon {
    height: 102px;
    display: flex;
    background: linear-gradient(#fff, #fbfcfd 50%, #e6e9ed);
    border: 1px solid #868c95;
}

.group {
    display: flex;
    flex-direction: column;
    border-right: 1px solid #c3c8ce;
    box-shadow: 1px 0 #fff;
}

.clipboard { width: 83px; }
.font { width: 164px; }
.align { width: 113px; }
.number { width: 89px; }
.styles { width: 117px; }
.cells { width: 69px; }
.editing { width: 170px; }

.group-body {
    flex: 1;
    display: flex;
}

.rows,
.stack {
    flex-direction: column;
    padding: 3px 0 0 4px;
}

.stack {
    padding-left: 0;
}

.row {
    height: 25px;
    display: flex;
    align-items: center;
}

.align .row {
    gap: 1px;
}

.list {
    display: flex;
    flex-direction: column;
    align-items: flex-start;
    padding: 1px 0 0 7px;
}

.item {
    height: 22px;
    gap: 3px;
    white-space: nowrap;
}

.item .caret {
    margin-left: 2px;
}

.group-name {
    height: 20px;
    display: flex;
    justify-content: center;
    position: relative;
    font-size: 12px;
    font-weight: 400;
    line-height: 20px;
    color: #666d78;
}

.group-name svg {
    position: absolute;
    right: 5px;
    top: 6px;
    width: 8px;
    height: 8px;
}

.clipboard .group-name {
    padding-right: 20px;
}

.big {
    flex-direction: column;
    justify-content: flex-start;
    padding: 4px 3px 0;
    line-height: 14px;
}

.big svg {
    width: 30px;
    height: 32px;
    margin-bottom: 5px;
}

.big .caret {
    margin-top: 7px;
}

.muted {
    width: 48px;
    color: #9a9fa6;
}

.muted .caret {
    border-top-color: #c3c6cb;
}

.picker {
    height: 25px;
    display: flex;
    align-items: center;
    position: relative;
    border: 1px solid #c8ccd2;
    background: #fff;
}

.picker + .picker {
    border-left: none;
}

.picker select {
    appearance: none;
    width: 100%;
    height: 23px;
    padding-left: 3px;
    color: #1d1d1d;
}

.picker .caret {
    position: absolute;
    right: 4px;
    pointer-events: none;
}

.family { width: 108px; }
.size { width: 47px; }
.format { width: 80px; }

.serif {
    font-family: "Liberation Serif", serif;
    font-size: 15px;
    color: #1d1d1d;
}

.bold { font-weight: 700; }
.italic { font-style: italic; }
.underline { text-decoration: underline; }

.grow,
.shrink {
    align-items: flex-start;
    font-size: 18px;
    font-weight: 700;
    line-height: 22px;
    color: #333;
}

.shrink {
    font-size: 14px;
}

.grow svg,
.shrink svg {
    width: 5px;
    height: 3px;
    margin-top: 2px;
}

.font-color {
    height: 17px;
    width: 16px;
    margin: 0 3px;
    border-bottom: 3px solid #f00;
    font-weight: 700;
    font-size: 16px;
    color: #2d4f8e;
}

.phonetic {
    flex-direction: column;
    color: #2c4fa0;
    line-height: 13px;
}

.phonetic small {
    font-size: 9px;
    font-weight: 600;
    line-height: 9px;
    color: #222;
}

.pressed {
    background: linear-gradient(#fbe28d, #fdd257);
    border: 1px solid #c8a24a;
    border-radius: 2px;
}

.percent {
    font-size: 14px;
}

.comma {
    font-family: "Liberation Serif", serif;
    font-size: 22px;
    font-weight: 700;
    line-height: 8px;
    padding-bottom: 8px;
    color: #222;
}

.decimals {
    flex-direction: column;
    align-items: flex-end;
    padding-right: 3px;
    font-family: "Liberation Sans", sans-serif;
    font-size: 9px;
    font-weight: 700;
    line-height: 8px;
}

.decimals b {
    color: #2f62b8;
}

.sigma {
    gap: 5px;
    padding-left: 3px;
    font-family: "Liberation Serif", serif;
    font-size: 17px;
    font-weight: 700;
    color: #222;
}

/* formula bar */
.formula-bar {
    height: 27px;
    padding: 3px 0;
    display: flex;
    border: solid #868c95;
    border-width: 0 1px;
    background: #e3e6ea;
}

.formula-bar > * {
    border: solid #868c95;
    border-width: 1px 0;
}

.name-box {
    width: 159px;
    display: flex;
    align-items: center;
    background: #fff;
}

.name-box input {
    width: 142px;
    font-family: "Liberation Mono", monospace;
    font-size: 14px;
    text-align: center;
    color: #111;
}

.fx-area {
    width: 77px;
    display: flex;
    align-items: center;
    justify-content: space-between;
    padding-right: 5px;
    background: #dfe2e7;
}

.knob {
    width: 18px;
    height: 18px;
    border-radius: 50%;
    border: 1px solid transparent;
    border-left-color: #adb2ba;
    background: radial-gradient(circle at 50% 45%, #b9bec6 0 3px, #e6e9ec 5px, #dfe2e7);
}

.fx {
    font-family: "Liberation Serif", serif;
    font-size: 16px;
    font-style: italic;
    font-weight: 700;
}

.fx sub {
    font-size: 11px;
}

.formula {
    flex: 1;
    min-width: 0;
    background: #fff;
    border-left: 1px solid #868c95;
}

.expand {
    width: 15px;
    border-left: 1px solid #868c95;
}

.expand svg {
    width: 8px;
    height: 6px;
}

/* sheet */
.sheet-area {
    flex: 1;
    min-height: 0;
    display: flex;
    border: solid #868c95;
    border-width: 0 1px;
}

.sheet {
    flex: 1;
    min-width: 0;
    overflow: hidden;
    background: #fff;
}

table {
    width: 898px;
    table-layout: fixed;
    border-collapse: separate;
    border-spacing: 0;
}

.row-col {
    width: 34px;
}

th {
    height: 18px;
    font-family: "Liberation Mono", monospace;
    font-size: 14px;
    font-weight: 400;
    line-height: 15px;
    vertical-align: bottom;
    background: #dfe2e7;
    border: solid #9ba2ac;
    border-width: 0 1px 1px 0;
}

thead th {
    border-top-width: 1px;
}

.corner {
    background: linear-gradient(135deg, transparent 50%, #b3bac3 50%) 20px 5px / 9px 9px no-repeat #dfe2e7;
}

th.current {
    background: linear-gradient(#fbe391, #f8cf55);
    border-color: #c69c35;
}

td {
    height: 18px;
    border: solid #d5d8dc;
    border-width: 0 1px 1px 0;
    padding: 0 3px;
    font-size: 16px;
    line-height: 20px;
    color: #1c1c1c;
    white-space: nowrap;
}

.heading td {
    height: 34px;
}

.heading td[colspan] {
    border-color: #fff;
    border-bottom-color: #ffc000;
    text-align: center;
    font-size: 26px;
    font-weight: 500;
    line-height: 30px;
    color: #000;
}

.data td,
.fields td {
    height: 22px;
}

.data td:nth-child(-n+8) {
    border-color: #e2b92c;
    text-align: right;
}

.data td:nth-child(2) {
    text-align: left;
}

.fields td:nth-child(-n+8) {
    background: #ffc000;
    border-color: #ffc000;
}

.fields .selected {
    position: relative;
}

.selected::before {
    content: "";
    position: absolute;
    inset: -2px;
    border: 3px solid #1f3a8a;
}

.selected::after {
    content: "";
    position: absolute;
    right: -3px;
    bottom: -3px;
    width: 6px;
    height: 6px;
    background: #1f3a8a;
    border: solid #fff;
    border-width: 1px 0 0 1px;
}

.arrow {
    border: 4px solid transparent;
}

.up { border-bottom: 5px solid #3c4450; border-top: none; }
.down { border-top: 5px solid #3c4450; border-bottom: none; }
.left { border-right: 5px solid #3c4450; border-left: none; }
.right { border-left: 5px solid #3c4450; border-right: none; }

.v-scroll {
    width: 15px;
    display: flex;
    flex-direction: column;
    border-left: 1px solid #b7bdc5;
    background: #d9dde2;
}

.v-scroll button {
    height: 15px;
}

.v-scroll .split {
    height: 6px;
    background: #fff;
    border: 1px solid #868c95;
}

.v-scroll .thumb {
    height: 387px;
    margin-bottom: auto;
    border: 1px solid #949ba5;
    border-radius: 2px;
    background: linear-gradient(#7d848e, #7d848e) center / 7px 1px no-repeat, linear-gradient(#7d848e, #7d848e) center calc(50% + 3px) / 7px 1px no-repeat, linear-gradient(#7d848e, #7d848e) center calc(50% - 3px) / 7px 1px no-repeat, linear-gradient(90deg, #f5f6f8, #d8dce2);
}

/* sheet tabs */
.sheet-bar {
    height: 16px;
    display: flex;
    border: 1px solid #868c95;
    border-bottom-color: #a4aab3;
    background: #d3d8de;
}

.sheet-nav {
    width: 59px;
    display: flex;
    align-items: center;
    justify-content: space-evenly;
    border-right: 1px solid #9ba2ac;
}

.sheet-nav svg {
    width: 8px;
    height: 8px;
}

.sheet-tab {
    padding: 0 6px 0 9px;
    font-size: 13px;
    line-height: 14px;
}

.sheet-tab.active {
    background: #fff;
}

.sheet-tab.flush {
    padding: 0 3px 0 0;
}

.slash {
    width: 11px;
    height: 14px;
}

.new-sheet {
    width: 22px;
}

.h-scroll {
    flex: 1;
    display: flex;
    align-items: stretch;
    justify-content: flex-end;
    padding-right: 15px;
}

.h-scroll .split {
    width: 6px;
    border: 1px solid #868c95;
    background: #fff;
}

.h-scroll button {
    width: 15px;
}

.track {
    width: 305px;
}

.track .thumb {
    width: 277px;
    height: 14px;
    border: 1px solid #949ba5;
    border-radius: 2px;
    background: repeating-linear-gradient(90deg, #7d848e 0 1px, transparent 1px 2px) center / 8px 7px no-repeat, linear-gradient(#f5f6f8, #dde1e6);
}

/* status bar */
.status-bar {
    height: 22px;
    display: flex;
    align-items: center;
    border: 1px solid #868c95;
    border-top: none;
    background: linear-gradient(#dfe1e5, #c5c8cd 50%, #b4b8be);
}

.state {
    padding: 0 9px 0 8px;
    border-right: 1px solid #868c95;
}

.views {
    margin-left: auto;
    padding-left: 4px;
    display: flex;
    border-left: 1px solid #868c95;
}

.views button {
    width: 19px;
    height: 18px;
}

.views svg {
    width: 14px;
    height: 12px;
}

.zoom-value {
    margin: 0 7px 0 8px;
    font-size: 12px;
}

.round svg {
    width: 16px;
    height: 16px;
}

.zoom {
    appearance: none;
    width: 100px;
    height: 16px;
    background: linear-gradient(#868c95, #868c95) center / 100% 1px no-repeat;
}

.zoom::-webkit-slider-thumb {
    appearance: none;
    width: 9px;
    height: 13px;
    border: 1px solid #666c74;
    border-radius: 1px 1px 5px 5px;
    background: #f4f5f6;
}

.grip {
    width: 12px;
    height: 12px;
    margin: 6px 0 0 7px;
}

/* taskbar */
.taskbar {
    height: 29px;
    display: flex;
    align-items: center;
    padding: 0 0 1px 1px;
    color: #000;
    background: #d4d0c8;
    border-top: 1px solid #fff;
}

.start {
    height: 22px;
    width: 48px;
    gap: 1px;
    border: 1px solid;
    border-color: #fff #404040 #404040 #fff;
    box-shadow: inset -1px -1px #808080;
}

.quick-launch {
    display: flex;
    gap: 8px;
    margin-left: 7px;
}

.more {
    width: 20px;
    font-size: 16px;
    font-weight: 700;
    padding-bottom: 4px;
}

.quick-launch + .more {
    margin-left: 4px;
}

.task {
    width: 159px;
    height: 23px;
    justify-content: flex-start;
    gap: 3px;
    padding-left: 3px;
    border: 1px solid;
    border-color: #404040 #fff #fff #404040;
    background: repeating-conic-gradient(#fff 0 25%, #d4d0c8 0 50%) 0 0 / 2px 2px;
}

.tray {
    margin-left: auto;
    display: flex;
    align-items: center;
    gap: 8px;
}

.tray .more {
    width: 24px;
    height: 25px;
    border-left: 1px solid #808080;
    box-shadow: inset 1px 0 #fff;
}
```
